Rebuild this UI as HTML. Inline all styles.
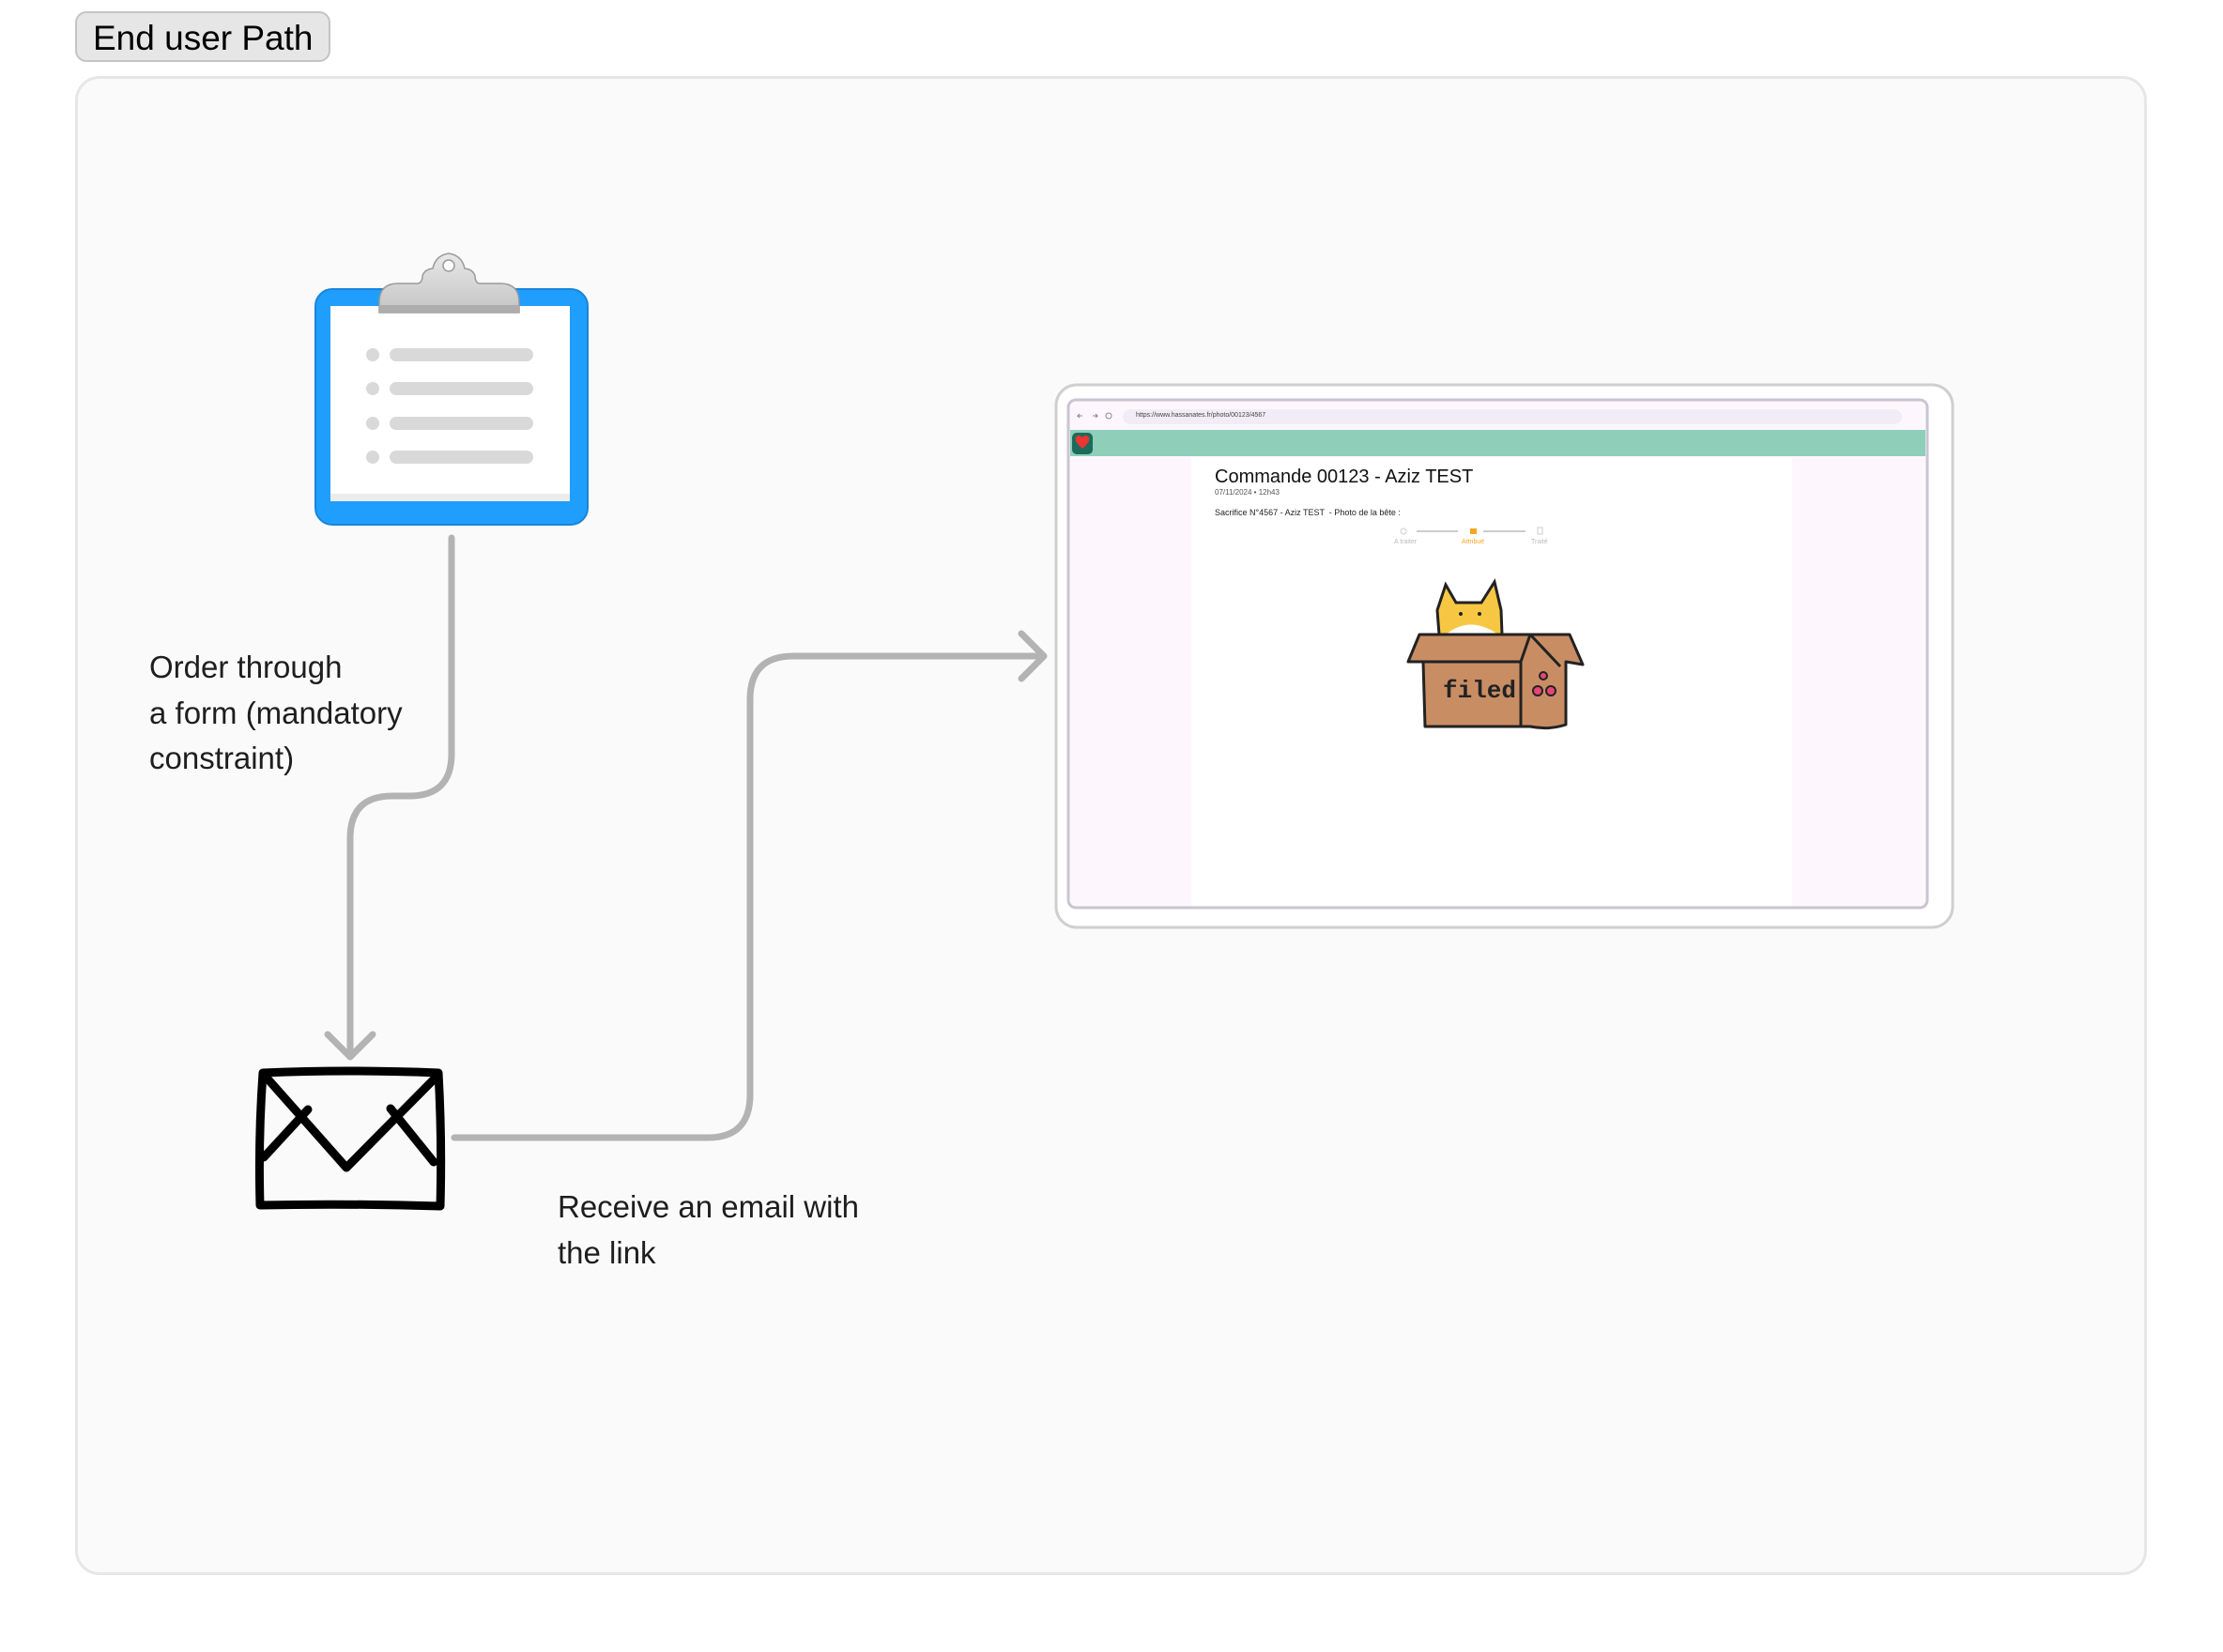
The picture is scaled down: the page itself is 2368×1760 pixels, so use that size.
<!DOCTYPE html>
<html><head><meta charset="utf-8"><style>
body{margin:0;width:2368px;height:1760px;background:#fff;position:relative;overflow:hidden;font-family:"Liberation Sans",sans-serif;}
.abs{position:absolute;}
.t{position:absolute;font-size:33px;color:#1e1e1e;line-height:48.5px;}
</style></head><body>
<div class="abs" style="left:80px;top:12px;width:272px;height:54px;background:#e6e6e6;border:2px solid #c4c4c4;border-radius:12px;box-sizing:border-box;"></div>
<div class="abs" style="left:99px;top:19px;font-size:37px;color:#000;line-height:44px;">End user Path</div>
<div class="abs" style="left:80px;top:81px;width:2218px;height:1605px;background:#fafafa;border:3px solid #e6e6e6;border-radius:26px;box-sizing:border-box;transform:scale(0.995);transform-origin:0 0;"></div>

<svg class="abs" style="left:0;top:0" width="2368" height="1760">
 <rect x="336" y="308" width="290" height="251" rx="18" fill="#1f9efd" stroke="#1a85d8" stroke-width="2"/>
 <rect x="352" y="326" width="255" height="208" fill="#fff"/>
 <rect x="352" y="526" width="255" height="8" fill="#ececec"/>
 <g fill="#d9d9d9">
  <circle cx="397" cy="378" r="7"/><rect x="415" y="371" width="153" height="14" rx="7"/>
  <circle cx="397" cy="414" r="7"/><rect x="415" y="407" width="153" height="14" rx="7"/>
  <circle cx="397" cy="451" r="7"/><rect x="415" y="444" width="153" height="14" rx="7"/>
  <circle cx="397" cy="487" r="7"/><rect x="415" y="480" width="153" height="14" rx="7"/>
 </g>
 <defs><linearGradient id="cg" x1="0" y1="0" x2="0" y2="1"><stop offset="0" stop-color="#e8e8e8"/><stop offset="1" stop-color="#c4c4c4"/></linearGradient></defs>
 <path d="M404 333 V322 Q404 302 424 302 H446 Q450 300 450 294 Q452 287 461 286 Q464 272 478 270 Q492 272 495 286 Q504 287 506 294 Q506 300 510 302 H533 Q553 302 553 322 V333 Z" fill="url(#cg)" stroke="#9a9a9a" stroke-width="1.5"/>
 <rect x="404" y="325" width="149" height="8" fill="#adadad"/>
 <circle cx="478" cy="283" r="6" fill="#fff" stroke="#9a9a9a" stroke-width="1.5"/>

 <g fill="none" stroke="#b3b3b3" stroke-width="7" stroke-linecap="round" stroke-linejoin="round">
  <path d="M481 573 V803 Q481 848 436 848 H418 Q373 848 373 893 V1126"/>
  <path d="M349 1102 L373 1126 L397 1102"/>
  <path d="M484 1212 H754 Q799 1212 799 1166 V745 Q799 699 845 699 H1111"/>
  <path d="M1088 675 L1112 699 L1088 723"/>
 </g>

 <g fill="none" stroke="#000" stroke-width="9" stroke-linecap="round" stroke-linejoin="round">
  <path d="M280 1143 Q370 1139 467 1143 Q471 1213 469 1285 Q370 1282 277 1284 Q275 1213 280 1143 Z"/>
  <path d="M283 1147 L369 1244 L465 1147"/>
  <path d="M281 1233 L328 1182"/>
  <path d="M416 1181 L462 1238"/>
 </g>

 <rect x="1125" y="410" width="955" height="578" rx="22" fill="#fff" stroke="#cfcfcf" stroke-width="3"/>
 <rect x="1138" y="426" width="915" height="541" rx="8" fill="#fdf7fd" stroke="#c9c5d1" stroke-width="3"/>
 <rect x="1196" y="436" width="830" height="16" rx="8" fill="#f2ecf6"/>
 <rect x="1140" y="458" width="911" height="28" fill="#8fcfb9"/>
 <rect x="1142" y="461" width="22" height="23" rx="5" fill="#1d6b5a"/>
 <path d="M1153 478 Q1144 470 1146 466 Q1149 462 1153 466 Q1157 462 1160 466 Q1162 470 1153 478Z" fill="#e33"/>
 <rect x="1269" y="487" width="640" height="478" fill="#fff"/>
 <g fill="none" stroke="#888" stroke-width="1">
  <path d="M1153 443 h-5 l2-2 M1148 443 l2 2"/><path d="M1164 443 h5 l-2-2 M1169 443 l-2 2"/>
  <circle cx="1181" cy="443" r="3"/>
 </g>
 <circle cx="1495" cy="566" r="3" fill="none" stroke="#ccc"/>
 <line x1="1509" y1="566" x2="1553" y2="566" stroke="#ccc" stroke-width="2"/>
 <rect x="1566" y="563" width="7" height="6" fill="#f5a623"/>
 <line x1="1580" y1="566" x2="1625" y2="566" stroke="#ccc" stroke-width="2"/>
 <rect x="1638" y="562" width="5" height="7" fill="none" stroke="#ccc"/>
 <path d="M1533 676 L1531 650 L1540 623 L1551 642 H1578 L1592 620 L1599 650 L1600 676Z" fill="#f7c744" stroke="#222" stroke-width="3"/>
 <path d="M1540 676 Q1566 655 1596 676Z" fill="#fff"/>
 <circle cx="1556" cy="654" r="2" fill="#222"/><circle cx="1576" cy="654" r="2" fill="#222"/>
 <path d="M1500 705 L1512 676 H1620 L1625 676 L1672 676 L1686 708 L1668 705 V772 Q1650 778 1630 774 H1518 L1516 705Z" fill="#c98d64" stroke="#222" stroke-width="3" stroke-linejoin="round"/>
 <path d="M1500 705 H1620 L1630 676 M1620 705 V774 M1630 676 L1662 710" fill="none" stroke="#222" stroke-width="3"/>
 <text x="1537" y="743" font-family="Liberation Mono,monospace" font-size="26" fill="#222" font-weight="bold">filed</text>
 <g fill="#f08" fill-opacity=".5" stroke="#222" stroke-width="2"><circle cx="1644" cy="720" r="4"/><circle cx="1638" cy="736" r="5"/><circle cx="1652" cy="736" r="5"/></g>
</svg>

<div class="abs" style="left:1210px;top:439px;font-size:7px;color:#444;">https://www.hassanates.fr/photo/00123/4567</div>
<div class="abs" style="left:1294px;top:496px;font-size:20px;color:#111;line-height:24px;">Commande 00123 - Aziz TEST</div>
<div class="abs" style="left:1294px;top:520px;font-size:8px;color:#555;">07/11/2024 • 12h43</div>
<div class="abs" style="left:1294px;top:541px;font-size:9px;color:#222;">Sacrifice N°4567 - Aziz TEST &nbsp;- Photo de la bête :</div>
<div class="abs" style="left:1485px;top:574px;font-size:7px;color:#bbb;">A traiter</div>
<div class="abs" style="left:1557px;top:574px;font-size:7px;color:#f5a623;">Attribué</div>
<div class="abs" style="left:1631px;top:574px;font-size:7px;color:#bbb;">Traité</div>

<div class="t" style="left:159px;top:687px;">Order through<br>a form (mandatory<br>constraint)</div>
<div class="t" style="left:594px;top:1262px;">Receive an email with<br>the link</div>
</body></html>
